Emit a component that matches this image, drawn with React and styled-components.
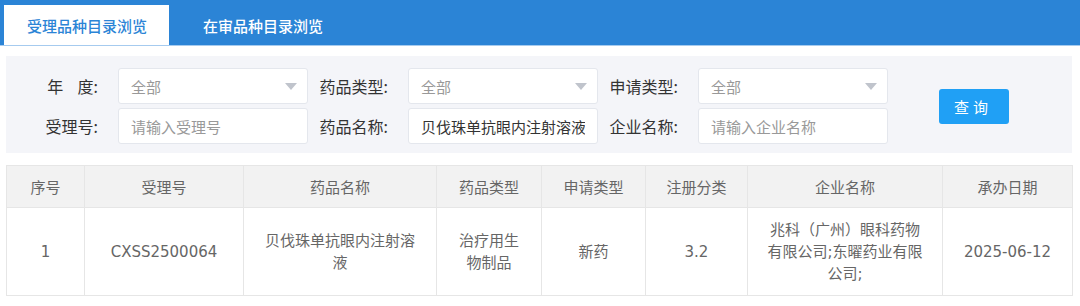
import { createGlobalStyle, styled } from "styled-components";

const GlobalStyle = createGlobalStyle`
  body {
    margin: 0;
    background: #fff;
    font-family: "Noto Sans CJK SC", "Noto Sans", sans-serif;
  }
`;

const columns = [
  { title: "序号", width: 78 },
  { title: "受理号", width: 159 },
  { title: "药品名称", width: 193 },
  { title: "药品类型", width: 105 },
  { title: "申请类型", width: 104 },
  { title: "注册分类", width: 102 },
  { title: "企业名称", width: 195 },
  { title: "承办日期", width: 130 },
];

const rows = [
  [
    "1",
    "CXSS2500064",
    "贝伐珠单抗眼内注射溶液",
    "治疗用生物制品",
    "新药",
    "3.2",
    "兆科（广州）眼科药物有限公司;东曜药业有限公司;",
    "2025-06-12",
  ],
];

function Arrow() {
  return (
    <svg width="12" height="7" viewBox="0 0 12 7">
      <path d="M0 0 L12 0 L6 7 Z" fill="#c0c4cc" />
    </svg>
  );
}

export default function App() {
  return (
    <Page>
      <GlobalStyle />
      <TabBar>
        <Tab $active>受理品种目录浏览</Tab>
        <Tab>在审品种目录浏览</Tab>
      </TabBar>

      <FilterPanel>
        <FilterGrid>
          <Label>年&nbsp;&nbsp;&nbsp;&nbsp;度:</Label>
          <Select>
            <span>全部</span>
            <Arrow />
          </Select>
          <Label>药品类型:</Label>
          <Select>
            <span>全部</span>
            <Arrow />
          </Select>
          <Label>申请类型:</Label>
          <Select>
            <span>全部</span>
            <Arrow />
          </Select>

          <Label>受理号:</Label>
          <Input placeholder="请输入受理号" />
          <Label>药品名称:</Label>
          <Input defaultValue="贝伐珠单抗眼内注射溶液" />
          <Label>企业名称:</Label>
          <Input placeholder="请输入企业名称" />
        </FilterGrid>
        <QueryButton>查询</QueryButton>
      </FilterPanel>

      <Table>
        <colgroup>
          {columns.map((c) => (
            <col key={c.title} style={{ width: c.width }} />
          ))}
        </colgroup>
        <thead>
          <tr>
            {columns.map((c) => (
              <Th key={c.title}>{c.title}</Th>
            ))}
          </tr>
        </thead>
        <tbody>
          {rows.map((r, i) => (
            <tr key={i}>
              {r.map((cell, j) => (
                <Td key={j}>{cell}</Td>
              ))}
            </tr>
          ))}
        </tbody>
      </Table>
    </Page>
  );
}

const Page = styled.div`
  width: 1080px;
`;

const TabBar = styled.div`
  display: flex;
  align-items: flex-end;
  height: 45px;
  padding-left: 4px;
  background: #2b84d6;
  border-bottom: 1px solid #a6cbef;
`;

const Tab = styled.div`
  height: 40px;
  display: flex;
  align-items: center;
  padding: ${(p) => (p.$active ? "0 22px 0 23px" : "0 34px")};
  background: ${(p) => (p.$active ? "#fff" : "transparent")};
  color: ${(p) => (p.$active ? "#2b84d6" : "#fff")};
  font-size: 15px;
  font-weight: 500;
`;

const FilterPanel = styled.div`
  margin: 10px 8px 0 6px;
  padding: 12px 0 9px 12px;
  background: #f4f5f9;
  display: flex;
  align-items: center;
`;

const FilterGrid = styled.div`
  display: grid;
  grid-template-columns: repeat(3, 100px 190px);
  row-gap: 4px;
  align-items: center;
`;

const Label = styled.label`
  padding-right: 20px;
  text-align: right;
  font-size: 16px;
  color: #333;
  white-space: nowrap;
`;

const fieldBase = `
  box-sizing: border-box;
  height: 36px;
  width: 190px;
  background: #fff;
  border: 1px solid #e4e7ed;
  border-radius: 3px;
  padding: 0 12px;
  font-family: "Noto Sans CJK SC", "Noto Sans", sans-serif;
  font-size: 15px;
`;

const Select = styled.div`
  ${fieldBase}
  display: flex;
  align-items: center;
  justify-content: space-between;
  padding-right: 10px;
  color: #999;
`;

const Input = styled.input`
  ${fieldBase}
  color: #333;
  outline: none;
  &::placeholder {
    color: #999;
  }
`;

const QueryButton = styled.button`
  margin-left: 51px;
  width: 70px;
  height: 35px;
  border: none;
  border-radius: 3px;
  background: #20a0f5;
  color: #fff;
  font-family: "Noto Sans CJK SC", "Noto Sans", sans-serif;
  font-size: 15px;
  letter-spacing: 4px;
  padding-left: 4px;
`;

const Table = styled.table`
  margin: 12px 8px 0 6px;
  width: 1066px;
  table-layout: fixed;
  border-collapse: collapse;
  font-size: 15px;
  color: #666;
`;

const Th = styled.th`
  height: 42px;
  box-sizing: border-box;
  background: #f2f2f2;
  border: 1px solid #e6e6e6;
  font-weight: normal;
  text-align: center;
  padding: 0;
`;

const Td = styled.td`
  height: 88px;
  box-sizing: border-box;
  border: 1px solid #e6e6e6;
  text-align: center;
  padding: 0 16px;
  line-height: 22px;
  font-family: "DejaVu Sans", "Noto Sans CJK SC", sans-serif;
`;
